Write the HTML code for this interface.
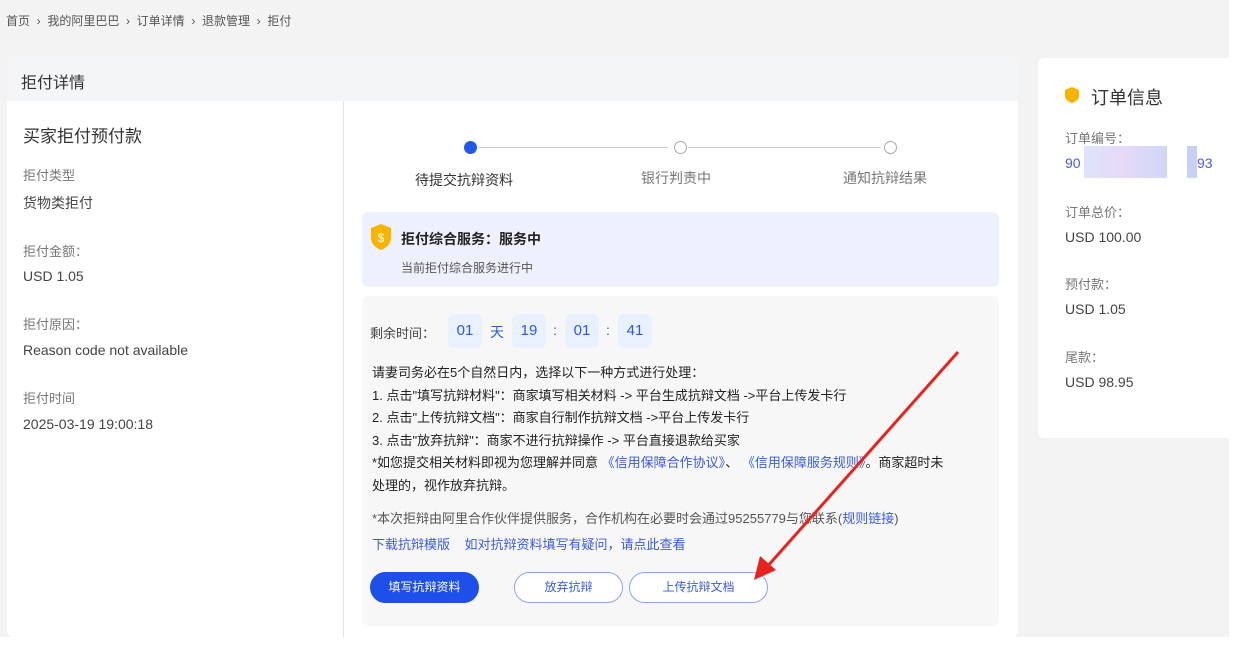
<!DOCTYPE html>
<html><head><meta charset="utf-8"><style>
*{margin:0;padding:0;box-sizing:border-box}
body{width:1239px;height:664px;background:#fff;font-family:"Liberation Sans","Noto Sans CJK SC",sans-serif;color:#333;position:relative;overflow:hidden}
.bg{position:absolute;left:0;top:0;width:1229px;height:637px;background:#f3f3f3}
.a{position:absolute}
.bc{left:6px;top:12px;font-size:12px;color:#555}
.card{left:7px;top:57px;width:1011px;height:580px;background:#fff;border-radius:6px;overflow:hidden}
.hd{left:0;top:0;width:1011px;height:44px;background:#f4f5f7;font-size:16px;color:#333;padding:12px 0 0 14px}
.lbl{font-size:13px;color:#777}
.val{font-size:14px;color:#444}
.blue{color:#3b5bdb}
.box{background:#e9f0ff;border-radius:6px;width:34px;height:34px;text-align:center;line-height:34px;color:#2a5ae0;font-size:15px}
.btn{position:absolute;top:572px;height:31px;border-radius:16px;font-size:12px;text-align:center;line-height:29px}
</style></head><body>
<div class="bg"></div>
<div class="a bc">首页 &nbsp;›&nbsp; 我的阿里巴巴 &nbsp;›&nbsp; 订单详情 &nbsp;›&nbsp; 退款管理 &nbsp;›&nbsp; 拒付</div>
<div class="a card">
 <div class="a hd">拒付详情</div>
 <div class="a" style="left:336px;top:44px;width:1px;height:536px;background:#e5e5e5"></div>
 <div class="a" style="left:16px;top:65px;font-size:17px;color:#333">买家拒付预付款</div>
 <div class="a lbl" style="left:16px;top:108px">拒付类型</div>
 <div class="a val" style="left:16px;top:136px">货物类拒付</div>
 <div class="a lbl" style="left:16px;top:184px">拒付金额：</div>
 <div class="a val" style="left:16px;top:211px">USD 1.05</div>
 <div class="a lbl" style="left:16px;top:257px">拒付原因：</div>
 <div class="a val" style="left:16px;top:285px">Reason code not available</div>
 <div class="a lbl" style="left:16px;top:331px">拒付时间</div>
 <div class="a val" style="left:16px;top:359px">2025-03-19 19:00:18</div>
</div>
<div class="a" style="left:478px;top:147px;width:190px;height:1px;background:#ccc"></div>
<div class="a" style="left:688px;top:147px;width:193px;height:1px;background:#ccc"></div>
<div class="a" style="left:464px;top:141px;width:13px;height:13px;border-radius:50%;background:#2158e8"></div>
<div class="a" style="left:674px;top:141px;width:13px;height:13px;border-radius:50%;border:1px solid #aaa;background:#fff"></div>
<div class="a" style="left:884px;top:141px;width:13px;height:13px;border-radius:50%;border:1px solid #aaa;background:#fff"></div>
<div class="a" style="left:415px;top:170px;font-size:14px;color:#333">待提交抗辩资料</div>
<div class="a" style="left:641px;top:168px;font-size:14px;color:#777">银行判责中</div>
<div class="a" style="left:843px;top:168px;font-size:14px;color:#777">通知抗辩结果</div>
<div class="a" style="left:362px;top:212px;width:637px;height:75px;background:#eef1fd;border-radius:6px"></div>
<svg class="a" style="left:370px;top:223px" width="22" height="28" viewBox="0 0 22 28"><path d="M11 1 L21 5 V15 C21 21 16 25 11 27 C6 25 1 21 1 15 V5Z" fill="#f7b500"/><text x="11" y="19" font-size="12" fill="#fff" text-anchor="middle" font-family="Liberation Sans">$</text></svg>
<div class="a" style="left:401px;top:229px;font-size:14px;font-weight:bold;color:#222">拒付综合服务：服务中</div>
<div class="a" style="left:401px;top:259px;font-size:12px;color:#555">当前拒付综合服务进行中</div>
<div class="a" style="left:362px;top:296px;width:637px;height:330px;background:#f7f7f8;border-radius:6px"></div>
<div class="a" style="left:370px;top:323px;font-size:13px;color:#444">剩余时间：</div>
<div class="a box" style="left:448px;top:314px">01</div>
<div class="a" style="left:490px;top:322px;font-size:14px;color:#2a5ae0">天</div>
<div class="a box" style="left:512px;top:314px">19</div>
<div class="a" style="left:553px;top:322px;font-size:14px;color:#2a5ae0">:</div>
<div class="a box" style="left:565px;top:314px">01</div>
<div class="a" style="left:606px;top:322px;font-size:14px;color:#2a5ae0">:</div>
<div class="a box" style="left:618px;top:314px">41</div>
<div class="a" style="left:372px;top:362px;font-size:13px;line-height:22.5px;color:#222;width:630px">
请妻司务必在5个自然日内，选择以下一种方式进行处理：<br>
1. 点击"填写抗辩材料"：商家填写相关材料 -&gt; 平台生成抗辩文档 -&gt;平台上传发卡行<br>
2. 点击"上传抗辩文档"：商家自行制作抗辩文档 -&gt;平台上传发卡行<br>
3. 点击"放弃抗辩"：商家不进行抗辩操作 -&gt; 平台直接退款给买家<br>
*如您提交相关材料即视为您理解并同意 <span class="blue">《信用保障合作协议》</span>、 <span class="blue">《信用保障服务规则》</span>。商家超时未<br>处理的，视作放弃抗辩。</div>
<div class="a" style="left:372px;top:508px;font-size:13px;color:#555;white-space:nowrap">*本次拒辩由阿里合作伙伴提供服务，合作机构在必要时会通过95255779与您联系(<span class="blue">规则链接</span>)</div>
<div class="a" style="left:372px;top:534px;font-size:13px;color:#3b5bdb">下载抗辩模版 &nbsp;&nbsp;&nbsp;如对抗辩资料填写有疑问，请点此查看</div>
<div class="btn" style="left:370px;width:109px;background:#1e4fe8;color:#fff;border:1px solid #1e4fe8">填写抗辩资料</div>
<div class="btn" style="left:514px;width:109px;background:#fff;color:#3b5bdb;border:1px solid #8aa4f0">放弃抗辩</div>
<div class="btn" style="left:629px;width:139px;background:#fff;color:#3b5bdb;border:1px solid #8aa4f0">上传抗辩文档</div>
<div class="a" style="left:1038px;top:58px;width:191px;height:380px;background:#fff;border-radius:6px 0 0 6px"></div>
<svg class="a" style="left:1064px;top:86px" width="16" height="18" viewBox="0 0 16 18"><path d="M8 1 L15 4 V10 C15 14 11 16 8 17 C5 16 1 14 1 10 V4Z" fill="#f7b500"/></svg>
<div class="a" style="left:1091px;top:84px;font-size:18px;color:#333">订单信息</div>
<div class="a lbl" style="left:1065px;top:128px">订单编号：</div>
<div class="a" style="left:1065px;top:155px;font-size:14px;color:#4a5ae8">90</div>
<div class="a" style="left:1084px;top:146px;width:83px;height:32px;background:linear-gradient(90deg,#dfe3fb,#e6d9f8,#cfd7f6)"></div>
<div class="a" style="left:1187px;top:146px;width:10px;height:32px;background:#c8d0f5"></div>
<div class="a" style="left:1197px;top:155px;font-size:14px;color:#4a5ae8">93</div>
<div class="a lbl" style="left:1065px;top:202px">订单总价：</div>
<div class="a val" style="left:1065px;top:229px">USD 100.00</div>
<div class="a lbl" style="left:1065px;top:274px">预付款：</div>
<div class="a val" style="left:1065px;top:301px">USD 1.05</div>
<div class="a lbl" style="left:1065px;top:347px">尾款：</div>
<div class="a val" style="left:1065px;top:374px">USD 98.95</div>
<svg class="a" style="left:0;top:0" width="1239" height="664"><line x1="958" y1="352" x2="766" y2="568" stroke="#e8231f" stroke-width="3"/><path d="M754 580 L760 556 L776 570Z" fill="#e8231f"/></svg>
</body></html>
